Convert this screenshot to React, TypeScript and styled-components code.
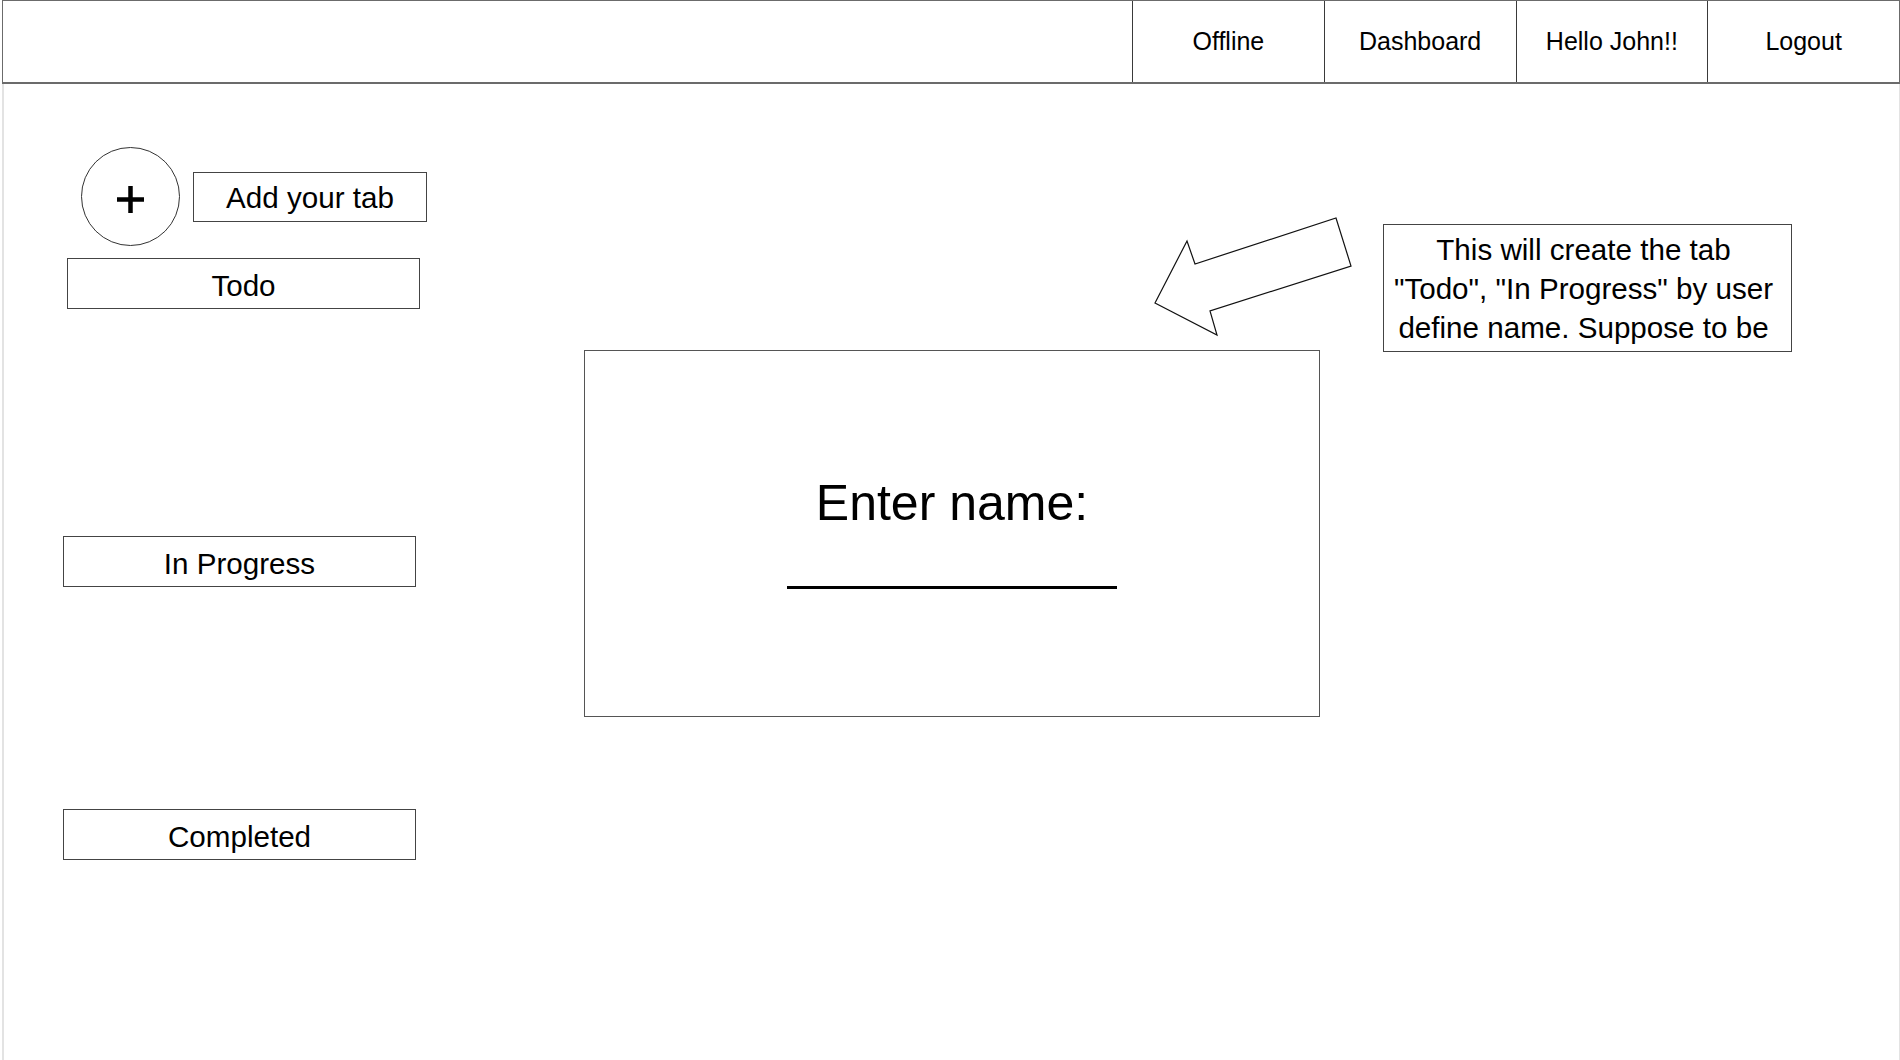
import React from "react";
import styled, { createGlobalStyle } from "styled-components";

const GlobalStyle = createGlobalStyle`
  html, body {
    margin: 0;
    padding: 0;
    background: #ffffff;
  }
  body {
    font-family: "Liberation Sans", Arial, Helvetica, sans-serif;
    color: #000000;
  }
  * { box-sizing: border-box; }
`;

const Page = styled.div`
  width: 1900px;
  min-height: 1060px;
  display: flex;
  flex-direction: column;
  overflow: hidden;
  background: #ffffff;
`;

const Header = styled.header`
  margin-left: 2px;
  width: 1898px;
  height: 84px;
  border: 1px solid #6b6b6b;
  border-bottom-width: 2px;
  display: flex;
  justify-content: flex-end;
`;

const NavItem = styled.div`
  flex: 0 0 191.75px;
  border-left: 1px solid #3a3a3a;
  display: flex;
  align-items: center;
  justify-content: center;
  font-size: 25px;
`;

const Body = styled.main`
  margin-left: 2px;
  width: 1898px;
  min-height: 976px;
  display: flex;
  border-left: 2px solid #e3e3e3;
  border-right: 1px solid #e3e3e3;
`;

const Sidebar = styled.aside`
  flex: 0 0 480px;
  padding: 63px 0 0 59px;
  display: flex;
  flex-direction: column;
  align-items: flex-start;
`;

const AddRow = styled.div`
  display: flex;
  align-items: center;
  gap: 13px;
  margin-left: 18px;
`;

const AddCircle = styled.div`
  width: 99px;
  height: 99px;
  border: 1px solid #333333;
  border-radius: 50%;
  display: flex;
  align-items: center;
  justify-content: center;
  padding-top: 5px;
`;

const AddLabel = styled.div`
  width: 234px;
  height: 50px;
  border: 1px solid #444444;
  display: flex;
  align-items: center;
  justify-content: center;
  padding-top: 3px;
  font-size: 29.6px;
`;

const TabBox = styled.div<{ $gap: number; $indent: number; $width: number }>`
  margin-top: ${(p) => p.$gap}px;
  margin-left: ${(p) => p.$indent}px;
  width: ${(p) => p.$width}px;
  height: 51px;
  border: 1px solid #444444;
  display: flex;
  align-items: center;
  justify-content: center;
  padding-top: 4px;
  font-size: 29.6px;
`;

const Workspace = styled.section`
  flex: 1;
  padding: 133px 0 0 100px;
  display: flex;
  flex-direction: column;
  align-items: flex-start;
`;

const CalloutRow = styled.div`
  display: flex;
  align-items: flex-start;
  gap: 30px;
  margin-left: 570px;
`;

const Note = styled.div`
  margin-top: 7px;
  width: 409px;
  height: 128px;
  border: 1px solid #444444;
  padding: 6px 8px 0 0;
  font-size: 29.6px;
  line-height: 38.8px;
  text-align: center;
  white-space: nowrap;
`;

const Modal = styled.div`
  margin-top: -2px;
  width: 736px;
  height: 367px;
  border: 1px solid #555555;
  display: flex;
  flex-direction: column;
  align-items: center;
  padding-top: 123px;
`;

const Prompt = styled.div`
  font-size: 50px;
`;

const InputLine = styled.div`
  margin-top: 54px;
  width: 330px;
  height: 3px;
  background: #000000;
`;

const PlusIcon = () => (
  <svg width="27" height="27" viewBox="0 0 27 27" aria-hidden="true">
    <rect x="11.25" y="0" width="4.5" height="27" fill="#000" />
    <rect x="0" y="11.25" width="27" height="4.5" fill="#000" />
  </svg>
);

const ArrowIcon = () => (
  <svg width="199" height="120" viewBox="0 0 199 120" aria-hidden="true">
    <polygon
      points="1,86 33,24 41,47 182,1 197,49 56,94 63,118"
      fill="#ffffff"
      stroke="#111111"
      strokeWidth="1.2"
      strokeLinejoin="miter"
    />
  </svg>
);

const navItems = ["Offline", "Dashboard", "Hello John!!", "Logout"];

export default function App() {
  return (
    <>
      <GlobalStyle />
      <Page>
        <Header>
          {navItems.map((n) => (
            <NavItem key={n}>{n}</NavItem>
          ))}
        </Header>
        <Body>
          <Sidebar>
            <AddRow>
              <AddCircle>
                <PlusIcon />
              </AddCircle>
              <AddLabel>Add your tab</AddLabel>
            </AddRow>
            <TabBox $gap={12} $indent={4} $width={353}>Todo</TabBox>
            <TabBox $gap={227} $indent={0} $width={353}>In Progress</TabBox>
            <TabBox $gap={222} $indent={0} $width={353}>Completed</TabBox>
          </Sidebar>
          <Workspace>
            <CalloutRow>
              <ArrowIcon />
              <Note>
                This will create the tab
                <br />
                "Todo", "In Progress" by user
                <br />
                define name. Suppose to be
              </Note>
            </CalloutRow>
            <Modal>
              <Prompt>Enter name:</Prompt>
              <InputLine />
            </Modal>
          </Workspace>
        </Body>
      </Page>
    </>
  );
}
